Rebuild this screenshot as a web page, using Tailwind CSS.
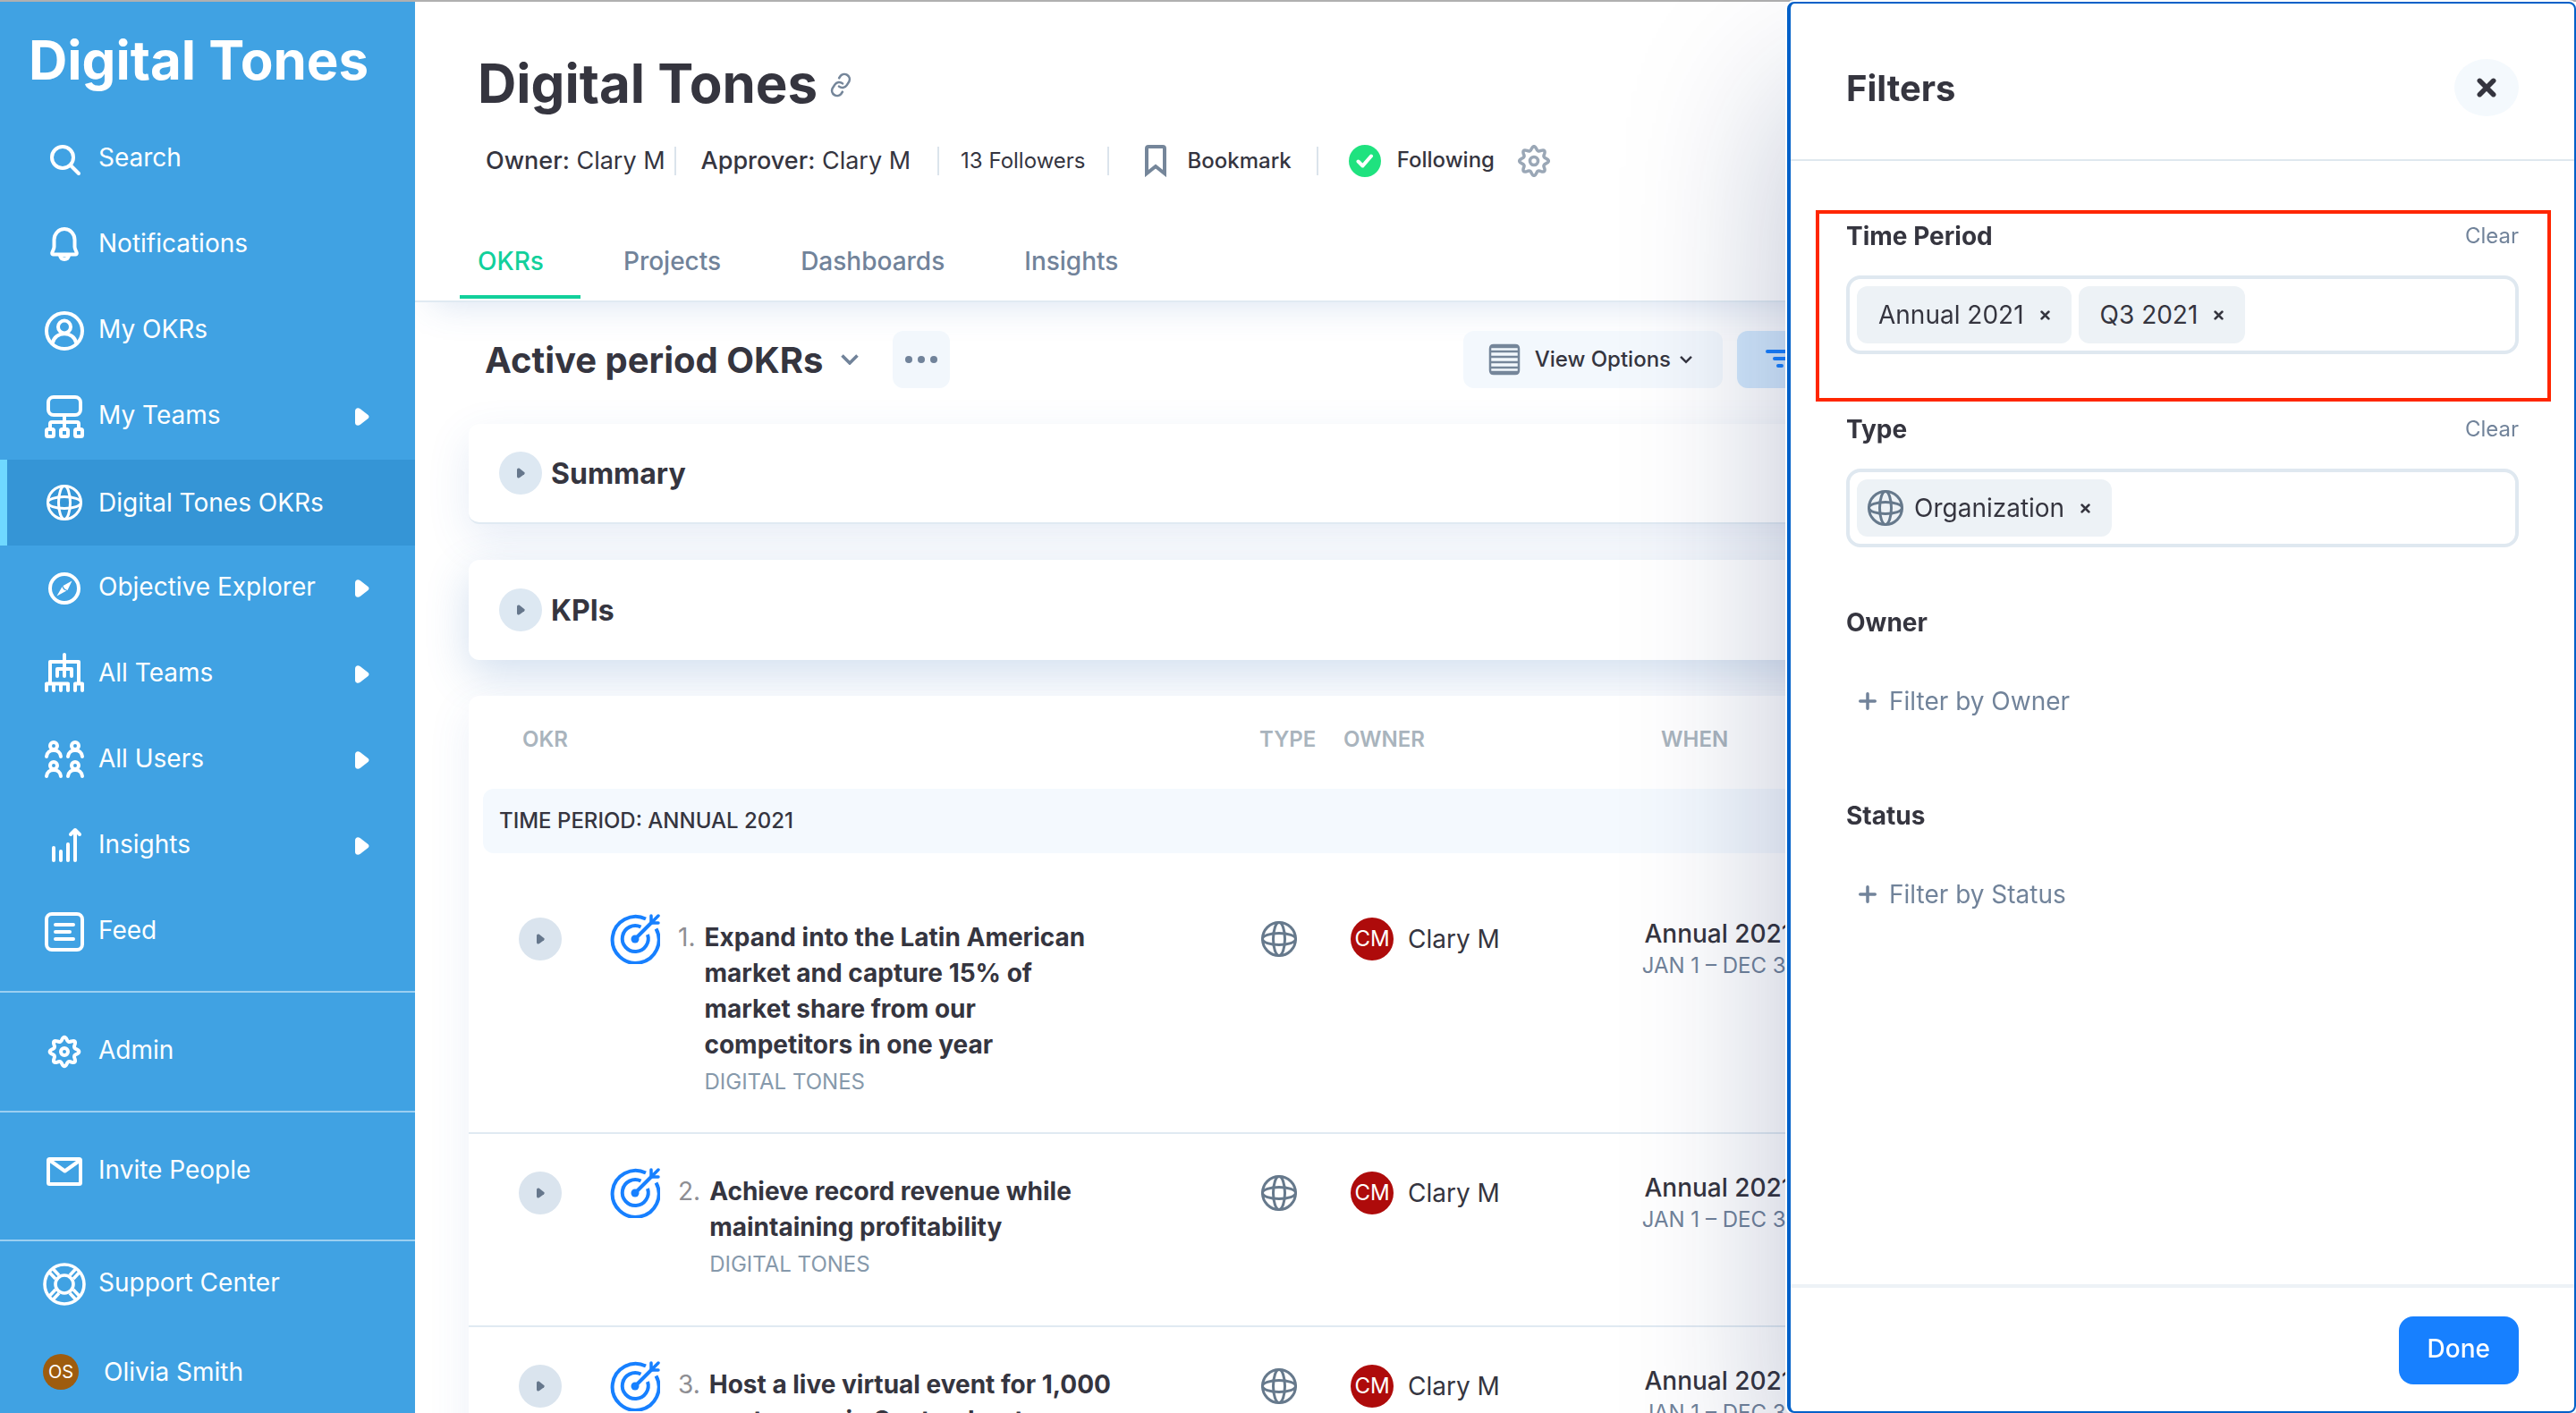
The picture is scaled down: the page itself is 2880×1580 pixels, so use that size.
<!DOCTYPE html>
<html lang="en">
<head>
<meta charset="utf-8">
<meta name="viewport" content="width=device-width, initial-scale=1">
<title>Digital Tones OKRs</title>
<script src="https://cdn.jsdelivr.net/npm/@tailwindcss/browser@4"></script>
</head>
<body class="h-screen overflow-hidden bg-white font-['Inter',sans-serif] text-[28px] leading-10 text-[#35353f]">

<!-- Icon sprite -->
<svg class="hidden" aria-hidden="true">
  <symbol id="i-search" viewBox="0 0 48 48"><g fill="none" stroke="currentColor" stroke-width="4" stroke-linecap="round"><circle cx="22" cy="22" r="12"/><path d="M31 31l9 9"/></g></symbol>
  <symbol id="i-bell" viewBox="0 0 48 48"><g fill="none" stroke="currentColor" stroke-width="4" stroke-linejoin="round"><path d="M12.500 18a11.500 12 0 0 1 23 0v8c0 3 2 4.500 2.300 7 .1 1-.5 1.500-1.300 1.500h-25c-.8 0-1.400-.5-1.300-1.500.3-2.500 2.300-4 2.300-7z"/><path d="M19 35.500c1 6 9 6 10 0z"/></g></symbol>
  <symbol id="i-user" viewBox="0 0 48 48"><g fill="none" stroke="currentColor" stroke-width="4"><circle cx="24" cy="24" r="20"/><circle cx="24" cy="19.500" r="7"/><path d="M10.500 38c3-14.500 24-14.500 27 0"/></g></symbol>
  <symbol id="i-myteams" viewBox="0 0 48 48"><g fill="none" stroke="currentColor" stroke-width="4" stroke-linecap="round"><rect x="6" y="2" width="36" height="20" rx="6"/><path d="M24 22v15M8 37v-5q0-2 2-2h28q2 0 2 2v5"/><rect x="4" y="38" width="8" height="8" rx="1.500"/><rect x="20" y="38" width="8" height="8" rx="1.500"/><rect x="36" y="38" width="8" height="8" rx="1.500"/></g></symbol>
  <symbol id="i-globe" viewBox="0 0 48 48"><g fill="none" stroke="currentColor" stroke-width="3"><circle cx="24" cy="24" r="18.500"/><ellipse cx="24" cy="24" rx="6.500" ry="18.500"/><ellipse cx="24" cy="24" rx="18.500" ry="6.500"/></g></symbol>
  <symbol id="i-compass" viewBox="0 0 48 48"><circle cx="24" cy="24" r="16" fill="none" stroke="currentColor" stroke-width="4"/><path fill="currentColor" d="M32.500 15.500l-10 5.500q1 4 5 5zM15.500 32.500l6-10.500q1 4 5 4.500z"/></symbol>
  <symbol id="i-allteams" viewBox="0 0 48 48"><g fill="none" stroke="currentColor" stroke-width="4" stroke-linecap="round" stroke-linejoin="round"><path d="M24 2v24M8 34V10h32v24M16 26v-8h16v8M4 42v-7.500h24V42M12 36v6M20 36v6M36 42v-7.500h8V42"/></g></symbol>
  <symbol id="i-users" viewBox="0 0 48 48"><g fill="none" stroke="currentColor" stroke-width="4" stroke-linecap="round"><circle cx="12" cy="8" r="4"/><path d="M4 20c1-9.500 15-9.500 16 0"/><circle cx="36" cy="8" r="4"/><path d="M28 20c1-9.500 15-9.500 16 0"/><circle cx="12" cy="30" r="4"/><path d="M4 42c1-9.500 15-9.500 16 0"/><circle cx="36" cy="30" r="4"/><path d="M28 42c1-9.500 15-9.500 16 0"/></g></symbol>
  <symbol id="i-insights" viewBox="0 0 48 48"><g fill="none" stroke="currentColor" stroke-width="4" stroke-linecap="round" stroke-linejoin="round"><path d="M12 26v14M20 30v10M28 22v18M36 40V6M31 11l5-5 5 5"/></g></symbol>
  <symbol id="i-feed" viewBox="0 0 48 48"><g fill="none" stroke="currentColor" stroke-width="4" stroke-linecap="round"><rect x="4" y="4" width="40" height="40" rx="6"/><path d="M14 16h20M14 24h16M14 32h20"/></g></symbol>
  <symbol id="i-gear" viewBox="-24 -24 48 48"><g fill="none" stroke="currentColor" stroke-width="4" stroke-linejoin="round"><path d="M13.700 2.700Q9.700 4 11.600 7.800Q13.400 13.400 7.800 11.600Q4 9.700 2.700 13.700Q0 19 -2.700 13.700Q-4 9.700 -7.800 11.600Q-13.400 13.400 -11.600 7.800Q-9.700 4 -13.700 2.700Q-19 0 -13.700 -2.700Q-9.700 -4 -11.600 -7.800Q-13.400 -13.400 -7.800 -11.600Q-4 -9.700 -2.700 -13.700Q0 -19 2.700 -13.700Q4 -9.700 7.800 -11.600Q13.400 -13.400 11.600 -7.800Q9.700 -4 13.700 -2.700Q19 0 13.700 2.700z"/><circle r="4"/></g></symbol>
  <symbol id="i-mail" viewBox="0 0 48 48"><g fill="none" stroke="currentColor" stroke-width="4" stroke-linejoin="round"><rect x="6" y="10" width="36" height="28" rx="1.500"/><path d="M7 11l17.500 12.500L42 11"/></g></symbol>
  <symbol id="i-support" viewBox="0 0 48 48"><g fill="none" stroke="currentColor" stroke-width="3.600"><circle cx="24" cy="24" r="22"/><circle cx="24" cy="24" r="10"/><path d="M14 18L7.500 11M18 14l-6.500-7M34 18l6.500-7M30 14l6.500-7M14 30l-6.500 7M18 34l-6.500 7M34 30l6.500 7M30 34l6.500 7"/></g></symbol>
  <symbol id="i-caret" viewBox="0 0 16 20"><path fill="currentColor" d="M0 3.500C0 .5 3 -.8 5.500 1L14.500 8q2 2 0 4l-9 7C3 20.800 0 19.500 0 16.500z"/></symbol>
  <symbol id="i-chevron" viewBox="0 0 20 12"><path fill="none" stroke="currentColor" stroke-width="3.600" d="M1.500 1.500L10 10l8.500-8.500"/></symbol>
  <symbol id="i-x" viewBox="0 0 20 20"><path fill="none" stroke="currentColor" stroke-width="5" stroke-linecap="round" d="M3 3l14 14M17 3L3 17"/></symbol>
  <symbol id="i-plus" viewBox="0 0 20 20"><path fill="none" stroke="currentColor" stroke-width="3.500" stroke-linecap="round" d="M10 1.750v16.500M1.750 10h16.500"/></symbol>
  <symbol id="i-link" viewBox="0 0 24 24"><g fill="none" stroke="currentColor" stroke-width="2.200" stroke-linecap="round"><path d="M10 13a5 5 0 0 0 7.500.5l3-3a5 5 0 0 0-7-7l-1.700 1.700"/><path d="M14 11a5 5 0 0 0-7.500-.5l-3 3a5 5 0 0 0 7 7l1.700-1.700"/></g></symbol>
  <symbol id="i-target" viewBox="0 0 56 56"><g fill="none" stroke="currentColor" stroke-width="4" stroke-linecap="butt"><path d="M40 5.500A26 26 0 1 0 51.500 16.500"/><path d="M34.500 14.500A14.500 14.500 0 1 0 42 23"/><path d="M28 28L47 9" stroke-linecap="round"/><path d="M46 2v8h8M46 10l8-8" stroke-width="3.500" stroke-linecap="round" stroke-linejoin="round"/></g><circle cx="28" cy="28" r="4.500" fill="currentColor"/></symbol>
</svg>

<div class="flex h-full border-t-2 border-[#b0b0b0]">

  <!-- Sidebar -->
  <aside class="flex w-[464px] shrink-0 flex-col overflow-hidden bg-[#40a2e3] text-white">
    <div class="h-32 pt-[29px] pl-8 text-[60px] leading-[72px] font-bold whitespace-nowrap">Digital Tones</div>
    <nav class="flex flex-col pb-[18px]">
      <a href="#" class="flex h-24 items-center gap-[14px] pl-12"><svg class="size-12"><use href="#i-search"/></svg><span class="pb-1">Search</span></a>
      <a href="#" class="flex h-24 items-center gap-[14px] pl-12"><svg class="size-12"><use href="#i-bell"/></svg><span class="pb-1">Notifications</span></a>
      <a href="#" class="flex h-24 items-center gap-[14px] pl-12"><svg class="size-12"><use href="#i-user"/></svg><span class="pb-1">My OKRs</span></a>
      <a href="#" class="flex h-24 items-center gap-[14px] pr-[51px] pl-12"><svg class="size-12"><use href="#i-myteams"/></svg><span class="grow pb-1">My Teams</span><svg class="h-5 w-4"><use href="#i-caret"/></svg></a>
      <a href="#" aria-current="page" class="flex h-24 items-center gap-[14px] border-l-8 border-[#6fd8ff] bg-[#3595d6] pl-10"><svg class="size-12"><use href="#i-globe"/></svg><span>Digital Tones OKRs</span></a>
      <a href="#" class="flex h-24 items-center gap-[14px] pr-[51px] pl-12"><svg class="size-12"><use href="#i-compass"/></svg><span class="grow pb-1">Objective Explorer</span><svg class="h-5 w-4"><use href="#i-caret"/></svg></a>
      <a href="#" class="flex h-24 items-center gap-[14px] pr-[51px] pl-12"><svg class="size-12"><use href="#i-allteams"/></svg><span class="grow pb-1">All Teams</span><svg class="h-5 w-4"><use href="#i-caret"/></svg></a>
      <a href="#" class="flex h-24 items-center gap-[14px] pr-[51px] pl-12"><svg class="size-12"><use href="#i-users"/></svg><span class="grow pb-1">All Users</span><svg class="h-5 w-4"><use href="#i-caret"/></svg></a>
      <a href="#" class="flex h-24 items-center gap-[14px] pr-[51px] pl-12"><svg class="size-12"><use href="#i-insights"/></svg><span class="grow pb-1">Insights</span><svg class="h-5 w-4"><use href="#i-caret"/></svg></a>
      <a href="#" class="flex h-24 items-center gap-[14px] pl-12"><svg class="size-12"><use href="#i-feed"/></svg><span class="pb-1">Feed</span></a>
    </nav>
    <a href="#" class="flex h-[134px] shrink-0 items-center gap-[14px] border-t-2 border-[#9bcff1] pl-12"><svg class="size-12"><use href="#i-gear"/></svg><span class="pb-1">Admin</span></a>
    <a href="#" class="flex h-[144px] shrink-0 items-center gap-[14px] border-t-2 border-[#9bcff1] pb-[10px] pl-12"><svg class="size-12"><use href="#i-mail"/></svg><span class="pb-1">Invite People</span></a>
    <a href="#" class="flex h-[98px] shrink-0 items-center gap-[14px] border-t-2 border-[#9bcff1] pl-12"><svg class="size-12"><use href="#i-support"/></svg><span class="pb-1">Support Center</span></a>
    <a href="#" class="flex h-24 shrink-0 items-center gap-7 pt-1 pl-12"><span class="flex size-10 items-center justify-center rounded-full bg-[#9e5c0e] text-[20px]">OS</span><span>Olivia Smith</span></a>
  </aside>

  <!-- Page -->
  <main class="min-w-0 grow overflow-hidden">
    <header class="border-b-2 border-[#e0eaf2] pt-[55px] pb-[2px] pl-[50px] shadow-[0_20px_40px_-20px_rgba(65,112,188,0.22)]">
      <div class="flex items-center gap-3 pl-5">
        <h1 class="text-[60px] leading-[72px] font-bold">Digital Tones</h1>
        <a href="#" aria-label="Copy link" class="pt-1 text-[#75869a]"><svg class="size-7 -rotate-12"><use href="#i-link"/></svg></a>
      </div>
      <div class="mt-[27px] flex h-12 items-center pl-[29px] text-[27px] whitespace-nowrap">
        <p class="pr-[10px] leading-8"><span class="font-medium">Owner:</span> Clary M</p>
        <p class="border-l-2 border-[#dbe4ec] pr-[30px] pl-7 leading-8"><span class="font-medium">Approver:</span> Clary M</p>
        <p class="border-l-2 border-[#dbe4ec] pr-6 pl-6 text-[24px] leading-8">13 Followers</p>
        <button type="button" class="flex h-8 items-center gap-6 border-l-2 border-[#dbe4ec] pr-7 pl-10 text-[24px] font-medium"><svg class="h-9 w-6 text-[#75869a]" viewBox="0 0 24 36"><path d="M2 4q0-2 2-2h16q2 0 2 2v28l-10-8-10 8z" fill="none" stroke="currentColor" stroke-width="4"/></svg>Bookmark</button>
        <button type="button" class="flex h-8 items-center gap-[18px] border-l-2 border-[#dbe4ec] pr-[26px] pl-[34px] text-[24px] font-medium"><svg class="size-9" viewBox="0 0 36 36"><circle cx="18" cy="18" r="18" fill="#1fe27f"/><path d="M10.500 18.500l5 5L25 12.500" fill="none" stroke="#fff" stroke-width="4" stroke-linecap="round" stroke-linejoin="round"/></svg><span class="pb-[2px]">Following</span></button>
        <button type="button" aria-label="Settings" class="text-[#9aa7b6]"><svg class="size-9" viewBox="-18 -18 36 36"><g fill="none" stroke="currentColor" stroke-width="3.600" stroke-linejoin="round"><path d="M13.700 2.700Q9.700 4 11.600 7.800Q13.400 13.400 7.800 11.600Q4 9.700 2.700 13.700Q0 19 -2.700 13.700Q-4 9.700 -7.800 11.600Q-13.400 13.400 -11.600 7.800Q-9.700 4 -13.700 2.700Q-19 0 -13.700 -2.700Q-9.700 -4 -11.600 -7.800Q-13.400 -13.400 -7.800 -11.600Q-4 -9.700 -2.700 -13.700Q0 -19 2.700 -13.700Q4 -9.700 7.800 -11.600Q13.400 -13.400 11.600 -7.800Q9.700 -4 13.700 -2.700Q19 0 13.700 2.700z"/><circle r="4.500"/></g></svg></button>
      </div>
      <nav class="mt-[50px] flex gap-7 leading-[76px] font-medium text-[#71839a]">
        <a href="#" aria-current="page" class="border-b-4 border-[#12d09b] pr-[41px] pl-5 text-[#12d09b]">OKRs</a>
        <a href="#" class="pr-[41px] pl-5">Projects</a>
        <a href="#" class="pr-[41px] pl-5">Dashboards</a>
        <a href="#" class="pr-[41px] pl-5">Insights</a>
      </nav>
    </header>

    <div class="pt-8 pr-10 pl-[60px]">
      <div class="relative flex h-16 items-center pl-[18px]">
        <h2 class="pt-[2px] text-[40px] leading-[48px] font-bold">Active period OKRs</h2>
        <button type="button" aria-label="Choose period" class="ml-5 text-[#71839a]"><svg class="h-3 w-5"><use href="#i-chevron"/></svg></button>
        <button type="button" aria-label="More" class="ml-[38px] flex size-16 items-center justify-center gap-[6px] rounded-xl bg-[#f2f7fc]"><i class="size-2 rounded-full bg-[#71839a]"></i><i class="size-2 rounded-full bg-[#71839a]"></i><i class="size-2 rounded-full bg-[#71839a]"></i></button>
        <div class="ml-auto flex gap-4 pr-[682px]">
          <button type="button" class="flex h-16 items-center rounded-xl bg-[#f3f8fd] pr-[34px] pl-7 text-[24px] font-medium whitespace-nowrap"><svg class="size-9 text-[#75869a]" viewBox="0 0 36 36"><path d="M2 6q0-4 4-4h24q4 0 4 4v24q0 4-4 4H6q-4 0-4-4zM2 4h32M2 9h32M2 15h32M2 21h32M2 27h32M2 32h32" fill="none" stroke="currentColor" stroke-width="2.500"/></svg><span class="ml-4">View Options</span><svg class="ml-[10px] h-[10px] w-[14px]"><use href="#i-chevron"/></svg></button>
          <button type="button" aria-label="Filters" class="flex h-16 w-[216px] items-center rounded-xl bg-[#d3e9fd] pl-8 text-[#1780ff]"><svg class="h-6 w-8" viewBox="0 0 32 24"><path d="M2 3h28M10 11h14M14 19h4" stroke="currentColor" stroke-width="4" stroke-linecap="round"/></svg></button>
        </div>
      </div>

      <section class="mt-10 flex h-28 items-center gap-[10px] rounded-xl border-b-2 border-[#e0eaf2] bg-white pl-[34px] shadow-[0_16px_48px_rgba(65,112,188,0.13)]">
        <button type="button" aria-label="Expand Summary" class="flex size-12 items-center justify-center rounded-full bg-[#dde8f2] text-[#66778c]"><svg class="h-3 w-[9px]"><use href="#i-caret"/></svg></button>
        <h3 class="pt-[2px] text-[32px] font-bold">Summary</h3>
      </section>
      <section class="relative z-10 mt-10 flex h-28 items-center gap-[10px] rounded-xl bg-white pl-[34px] shadow-[0_16px_48px_rgba(65,122,188,0.24)]">
        <button type="button" aria-label="Expand KPIs" class="flex size-12 items-center justify-center rounded-full bg-[#dde8f2] text-[#66778c]"><svg class="h-3 w-[9px]"><use href="#i-caret"/></svg></button>
        <h3 class="pt-[2px] text-[32px] font-bold">KPIs</h3>
      </section>

      <section class="relative z-10 mt-10 rounded-xl bg-white shadow-[0_16px_48px_rgba(65,112,188,0.10)]">
        <table class="w-full table-fixed">
          <colgroup><col class="w-[158px]"><col class="w-[706px]"><col class="w-[84px]"><col class="w-[348px]"><col class="w-[202px]"><col></colgroup>
          <thead>
            <tr class="h-[104px] text-left text-[24px] text-[#a9b4bd] [&>th]:pb-[6px] [&>th]:font-semibold">
              <th class="pl-[60px]">OKR</th><th></th><th class="pl-5">TYPE</th><th class="pl-[30px]">OWNER</th><th class="pl-[37px]">WHEN</th><th></th>
            </tr>
          </thead>
          <tbody>
            <tr><th colspan="6" class="px-4 pb-[30px] text-left"><div class="h-[72px] rounded-xl bg-[#f4f9fe] pl-[18px] text-[24px] leading-[72px] font-medium">TIME PERIOD: ANNUAL 2021</div></th></tr>
            <tr class="border-b-2 border-[#e0eaf2] align-top">
              <td class="pt-[42px] pl-14"><button type="button" aria-label="Expand" class="flex size-12 items-center justify-center rounded-full bg-[#dae4ee] text-[#66778c]"><svg class="h-3 w-[9px]"><use href="#i-caret"/></svg></button></td>
              <td class="pt-[38px] pb-9"><div class="flex w-[572px]"><svg class="size-14 shrink-0 text-[#1780ff]"><use href="#i-target"/></svg><span class="mt-[6px] ml-5 text-[#8e8e93]">1.</span><div class="mt-[6px] ml-[10px]"><a href="#" class="block font-bold">Expand into the Latin American market and capture 15% of market share from our competitors in one year</a><p class="pt-[2px] text-[24px] text-[#8699ab]">DIGITAL TONES</p></div></div></td>
              <td class="pt-[46px]"><svg class="mx-auto size-10 text-[#66798c]" viewBox="4 4 40 40" role="img" aria-label="Organization"><use href="#i-globe" width="48" height="48"/></svg></td>
              <td class="pt-[42px] pl-[38px]"><div class="flex items-center gap-4"><span class="flex size-12 items-center justify-center rounded-full bg-[#ae0b0b] text-[24px] text-white">CM</span>Clary M</div></td>
              <td class="pt-[42px] text-center whitespace-nowrap"><p class="leading-9 font-medium">Annual 2021</p><p class="text-[24px] leading-9 text-[#71839a]">JAN 1 – DEC 31</p></td><td></td>
            </tr>
            <tr class="h-[216px] border-b-2 border-[#e0eaf2] align-top">
              <td class="pt-[42px] pl-14"><button type="button" aria-label="Expand" class="flex size-12 items-center justify-center rounded-full bg-[#dae4ee] text-[#66778c]"><svg class="h-3 w-[9px]"><use href="#i-caret"/></svg></button></td>
              <td class="pt-[38px]"><div class="flex w-[572px]"><svg class="size-14 shrink-0 text-[#1780ff]"><use href="#i-target"/></svg><span class="mt-[6px] ml-5 text-[#8e8e93]">2.</span><div class="mt-[6px] ml-[10px]"><a href="#" class="block font-bold">Achieve record revenue while maintaining profitability</a><p class="pt-[2px] text-[24px] text-[#8699ab]">DIGITAL TONES</p></div></div></td>
              <td class="pt-[46px]"><svg class="mx-auto size-10 text-[#66798c]" viewBox="4 4 40 40" role="img" aria-label="Organization"><use href="#i-globe" width="48" height="48"/></svg></td>
              <td class="pt-[42px] pl-[38px]"><div class="flex items-center gap-4"><span class="flex size-12 items-center justify-center rounded-full bg-[#ae0b0b] text-[24px] text-white">CM</span>Clary M</div></td>
              <td class="pt-[42px] text-center whitespace-nowrap"><p class="leading-9 font-medium">Annual 2021</p><p class="text-[24px] leading-9 text-[#71839a]">JAN 1 – DEC 31</p></td><td></td>
            </tr>
            <tr class="h-[216px] align-top">
              <td class="pt-[42px] pl-14"><button type="button" aria-label="Expand" class="flex size-12 items-center justify-center rounded-full bg-[#dae4ee] text-[#66778c]"><svg class="h-3 w-[9px]"><use href="#i-caret"/></svg></button></td>
              <td class="pt-[38px]"><div class="flex w-[572px]"><svg class="size-14 shrink-0 text-[#1780ff]"><use href="#i-target"/></svg><span class="mt-[6px] ml-5 text-[#8e8e93]">3.</span><div class="mt-[6px] ml-[10px]"><a href="#" class="block font-bold">Host a live virtual event for 1,000 customers in September to</a></div></div></td>
              <td class="pt-[46px]"><svg class="mx-auto size-10 text-[#66798c]" viewBox="4 4 40 40" role="img" aria-label="Organization"><use href="#i-globe" width="48" height="48"/></svg></td>
              <td class="pt-[42px] pl-[38px]"><div class="flex items-center gap-4"><span class="flex size-12 items-center justify-center rounded-full bg-[#ae0b0b] text-[24px] text-white">CM</span>Clary M</div></td>
              <td class="pt-[42px] text-center whitespace-nowrap"><p class="leading-9 font-medium">Annual 2021</p><p class="text-[24px] leading-9 text-[#71839a]">JAN 1 – DEC 31</p></td><td></td>
            </tr>
          </tbody>
        </table>
      </section>
    </div>
  </main>
</div>

<!-- Filter drawer over the page -->
<div role="dialog" aria-labelledby="filters-title" class="fixed top-[2px] right-0 bottom-0 z-20 flex w-[882px] flex-col rounded-lg border-2 border-l-4 border-[#0060c8] bg-white shadow-[0_0_0_2px_#fff,0_100px_180px_rgba(10,30,90,0.27)]">
  <div class="flex h-[176px] items-center justify-between border-b-2 border-[#dfe8ef] px-[62px] pt-[14px]">
    <h2 id="filters-title" class="pt-[2px] text-[40px] leading-[48px] font-bold">Filters</h2>
    <button type="button" aria-label="Close" class="flex h-16 w-[72px] items-center justify-center rounded-[50%] bg-[#f4f9fd]"><svg class="size-[22px]"><use href="#i-x"/></svg></button>
  </div>
  <div class="grow px-[62px] pt-[52px]">
    <div class="relative h-[216px]">
      <div class="flex h-[76px] justify-between leading-[64px]"><label for="f-period" class="font-bold">Time Period</label><button type="button" class="h-16 text-[24px] text-[#71839a]">Clear</button></div>
      <div class="flex h-[88px] items-center gap-2 rounded-2xl border-4 border-[#dfe8f0] px-2">
        <span class="flex h-16 items-center gap-[18px] rounded-xl bg-[#edf2f6] pr-6 pl-6 whitespace-nowrap">Annual 2021<button type="button" aria-label="Remove Annual 2021"><svg class="size-[11px]"><use href="#i-x"/></svg></button></span>
        <span class="flex h-16 items-center gap-[18px] rounded-xl bg-[#edf2f6] pr-6 pl-6 whitespace-nowrap">Q3 2021<button type="button" aria-label="Remove Q3 2021"><svg class="size-[11px]"><use href="#i-x"/></svg></button></span>
        <input id="f-period" type="text" class="h-full min-w-0 grow outline-none">
      </div>
      <!-- Callout frame -->
      <div class="pointer-events-none absolute top-[3px] -right-9 -left-[34px] h-[214px] border-4 border-[#ff2600]"></div>
    </div>
    <div class="h-[216px]">
      <div class="flex h-[76px] justify-between leading-[64px]"><label for="f-type" class="font-bold">Type</label><button type="button" class="h-16 text-[24px] text-[#71839a]">Clear</button></div>
      <div class="flex h-[88px] items-center gap-2 rounded-2xl border-4 border-[#dfe8f0] px-2">
        <span class="flex h-16 items-center rounded-xl bg-[#edf2f6] pr-6 pl-3 whitespace-nowrap"><svg class="mr-3 size-10 text-[#66798c]" viewBox="4 4 40 40"><use href="#i-globe" width="48" height="48"/></svg>Organization<button type="button" aria-label="Remove Organization" class="ml-[18px]"><svg class="size-[11px]"><use href="#i-x"/></svg></button></span>
        <input id="f-type" type="text" class="h-full min-w-0 grow outline-none">
      </div>
    </div>
    <div class="h-[216px]">
      <h3 class="h-[76px] leading-[64px] font-bold">Owner</h3>
      <button type="button" class="flex h-[88px] items-center gap-[14px] pl-[14px] text-[#71839a]"><svg class="size-5"><use href="#i-plus"/></svg>Filter by Owner</button>
    </div>
    <div class="h-[216px]">
      <h3 class="h-[76px] leading-[64px] font-bold">Status</h3>
      <button type="button" class="flex h-[88px] items-center gap-[14px] pl-[14px] text-[#71839a]"><svg class="size-5"><use href="#i-plus"/></svg>Filter by Status</button>
    </div>
  </div>
  <div class="flex justify-end border-t-4 border-[#edf2f6] px-[62px] pt-8 pb-[30px]">
    <button type="button" class="h-[76px] rounded-2xl bg-[#1780ff] px-8 pb-1 font-medium text-white">Done</button>
  </div>
</div>
</body>
</html>
